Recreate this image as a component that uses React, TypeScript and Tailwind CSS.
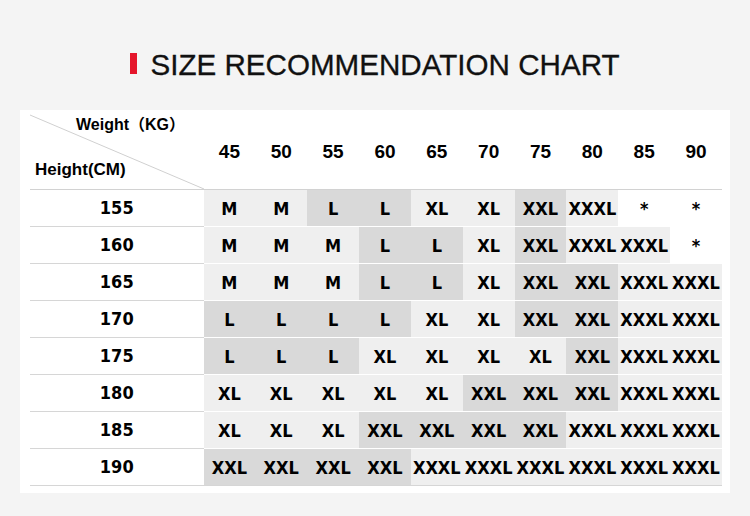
const tone: Record<string, string> = {
  l: "bg-[#efefef]",
  g: "bg-[#d9d9d9]",
  w: "bg-white",
};

const weights = [45, 50, 55, 60, 65, 70, 75, 80, 85, 90];

// each cell is "size/tone": l = light, g = grey, w = white
const chart: [string, string][] = [
  ["155", "M/l M/l L/g L/g XL/l XL/l XXL/g XXXL/l */w */w"],
  ["160", "M/l M/l M/l L/g L/g XL/l XXL/g XXXL/l XXXL/l */w"],
  ["165", "M/l M/l M/l L/g L/g XL/l XXL/g XXL/g XXXL/l XXXL/l"],
  ["170", "L/g L/g L/g L/g XL/l XL/l XXL/g XXL/g XXXL/l XXXL/l"],
  ["175", "L/g L/g L/g XL/l XL/l XL/l XL/l XXL/g XXXL/l XXXL/l"],
  ["180", "XL/l XL/l XL/l XL/l XL/l XXL/g XXL/g XXL/g XXXL/l XXXL/l"],
  ["185", "XL/l XL/l XL/l XXL/g XXL/g XXL/g XXL/g XXXL/l XXXL/l XXXL/l"],
  ["190", "XXL/g XXL/g XXL/g XXL/g XXXL/l XXXL/l XXXL/l XXXL/l XXXL/l XXXL/l"],
];

export default function App() {
  return (
    <div className="w-[750px] h-[516px] overflow-hidden bg-[#f4f4f4] text-black font-['Liberation_Sans','Noto_Sans_CJK_SC',sans-serif]">
      {/* Title */}
      <div className="flex justify-center items-start gap-[13px] pt-[50px]">
        <span className="mt-[3px] h-[21px] w-[7px] bg-[#e5162b]" />
        <h1 className="text-[29.6px] leading-[29px] text-[#111] [-webkit-text-stroke:0.3px_#111]">SIZE RECOMMENDATION CHART</h1>
      </div>

      {/* Chart */}
      <div className="mx-[20px] mt-[31px] bg-white pl-[10px] pr-[8px] pb-[7px]">
        <div className="flex h-[80px] border-b border-[#d2d2d2]">
          <div className="relative w-[174px] font-bold">
            <svg className="absolute inset-0" width="174" height="80" viewBox="0 0 174 80">
              <line x1="0" y1="5" x2="174" y2="79" stroke="#d0d0d0" strokeWidth="1" />
            </svg>
            <p className="relative pl-[46px] pt-[7px] text-[16px] leading-[16px]">Weight（KG）</p>
            <p className="relative mt-[28px] pl-[5px] text-[17px] leading-[17px]">Height(CM)</p>
          </div>
          {weights.map((w) => (
            <div key={w} className="w-[52px] flex items-center justify-center pt-[4px] text-[19px] leading-[19px] font-bold">
              {w}
            </div>
          ))}
        </div>

        {chart.map(([height, cells], i) => {
          const last = i === chart.length - 1;
          return (
            <div key={height} className="flex h-[37px] font-['DejaVu_Sans_Condensed','Liberation_Sans',sans-serif]">
              <div className="w-[174px] flex items-center justify-center border-b border-[#d6d6d6] text-[18px] leading-[18px] font-bold">
                {height}
              </div>
              {cells.split(" ").map((c, j) => {
                const [size, t] = c.split("/");
                return (
                  <div
                    key={j}
                    className={`w-[52px] flex items-center justify-center pt-[2px] border-b text-[18px] leading-[18px] font-bold ${tone[t]} ${last ? "border-[#d6d6d6]" : "border-white"}`}
                  >
                    {size}
                  </div>
                );
              })}
            </div>
          );
        })}
      </div>
    </div>
  );
}
